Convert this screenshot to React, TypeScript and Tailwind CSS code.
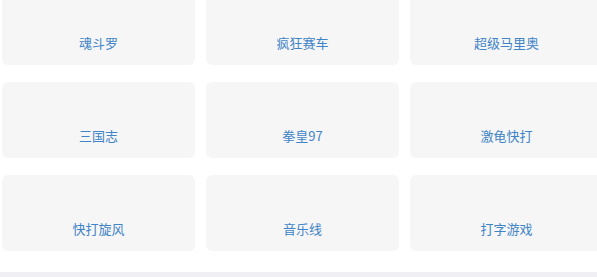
import React from 'react';

const games = ['魂斗罗', '疯狂赛车', '超级马里奥', '三国志', '拳皇97', '激龟快打', '快打旋风', '音乐线', '打字游戏'];

const App: React.FC = () => {
  return (
    <div className="h-[277px] w-[597px] overflow-hidden bg-white font-['Noto_Sans_CJK_SC',sans-serif]">
      {/* Game grid */}
      <div className="-mt-[11px] grid w-[620px] grid-cols-[193px_193px_193px] gap-x-[11px] gap-y-[17px] pl-[2px]">
        {games.map((name) => (
          <div
            key={name}
            className="flex h-[76px] flex-col items-center justify-end rounded-[6px] bg-[#f6f6f7] pb-[13px]"
          >
            <span className="text-[13px] leading-[18px] text-[#3f84c6]">{name}</span>
          </div>
        ))}
      </div>

      {/* Bottom band */}
      <div className="mt-[21px] h-[20px] bg-[#efeff4]" />
    </div>
  );
};

export default App;
